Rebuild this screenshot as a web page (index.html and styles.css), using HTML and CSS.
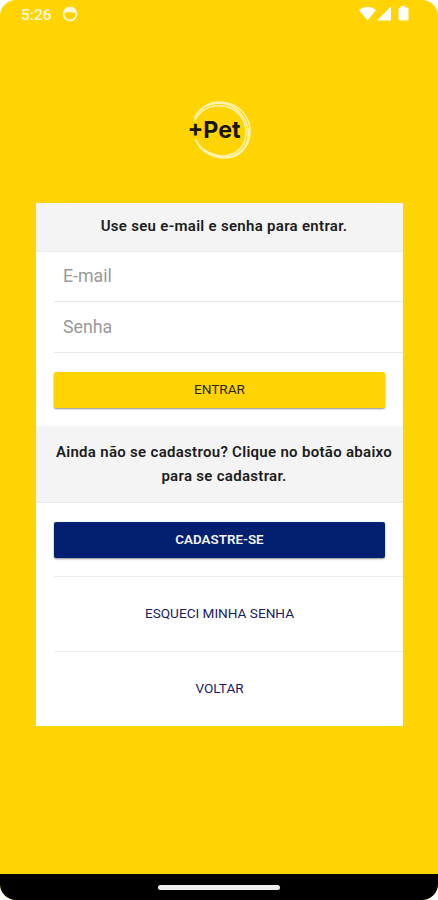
FILE: index.html
```html
<!DOCTYPE html>
<html lang="pt-BR">

<head>
    <meta charset="UTF-8">
    <meta name="viewport" content="width=device-width, initial-scale=1.0">
    <title>+Pet</title>

    <link rel="stylesheet" href="styles.css">
</head>

<body>
    <div class="screen">
        <div class="statusBar">
            <span class="time">5:26</span>
            <svg class="face" width="16" height="16" viewBox="0 0 16 16">
                <circle cx="8" cy="8" r="6.4" fill="none" stroke="#fff9df" stroke-width="1.7" />
                <path d="M2 7V4.500L5 1.500h6L14 4.500V7Q11 7.500 10 5.500Q8 7.500 6 5.500Q5 7.500 2 7z" fill="#fff9df" />
            </svg>
            <svg class="signals" width="51" height="16" viewBox="0 0 51 16">
                <path d="M0 4Q8.500-2.500 17 4L8.500 14.500z" fill="#fff" />
                <path d="M32 0.500V14.500H18z" fill="#fff" />
                <path d="M42 0h4v1.500h2q1.500 0 1.500 1.500v10q0 1.500-1.500 1.500h-7q-1.500 0-1.500-1.500V3q0-1.500 1.500-1.500h1z" fill="#fff" />
            </svg>
        </div>

        <div class="logo">
            <svg width="68" height="64" viewBox="0 0 68 64">
                <g fill="none" stroke="#fff3b4" stroke-width="1.500" stroke-linecap="round">
                    <path d="M9 18C14 5 28 0 41 3C55 6 65 19 64 33C63 49 52 58 39 58C26 58 14 51 10 40" />
                    <path d="M9 20C16 6 31 4 42 7C56 12 63 27 59 40C55 53 42 58 30 55C19 52 12 46 10 40" />
                    <path d="M9 17C20 -1 43 0 54 13C65 25 65 42 55 51C43 62 20 57 12 44" />
                </g>
                <text x="1.500" y="37.500" class="logoText" textLength="53" lengthAdjust="spacingAndGlyphs">+Pet</text>
            </svg>
        </div>

        <div class="card">
            <div class="header">Use seu e-mail e senha para entrar.</div>
            <input class="field field-email" type="text" placeholder="E-mail">
            <input class="field" type="password" placeholder="Senha">
            <div class="btn btn-yellow">ENTRAR</div>
            <div class="header header-big">Ainda não se cadastrou? Clique no botão abaixo<br>para se cadastrar.</div>
            <div class="btn btn-blue">CADASTRE-SE</div>
            <div class="link">ESQUECI MINHA SENHA</div>
            <div class="link">VOLTAR</div>
        </div>

        <div class="navBar">
            <div class="handle"></div>
        </div>
    </div>
</body>

</html>
```
FILE: styles.css
```css
* {
    box-sizing: border-box;
}

body {
    margin: 0;
    background-color: white;
    font-family: Roboto, "Liberation Sans", sans-serif;
}

.screen {
    width: 438px;
    height: 900px;
    background-color: #ffd402;
    border-radius: 16px;
    overflow: hidden;
    display: flex;
    flex-direction: column;
}

.statusBar {
    height: 100px;
    padding: 6px 28px 0 21px;
    display: flex;
    align-items: flex-start;
}

.time {
    font-size: 15.5px;
    font-weight: 500;
    line-height: 18px;
    color: #fff9df;
}

.face {
    margin-left: 10px;
}

.signals {
    margin-left: auto;
}

.logo {
    height: 103px;
    padding-left: 186px;
}

.logo svg {
    display: block;
}

.logoText {
    font-family: Inter, Roboto, sans-serif;
    font-size: 23.5px;
    font-weight: 700;
    fill: #17150c;
}

.card {
    width: 367px;
    height: 523px;
    margin-left: 36px;
    background-color: white;
}

.header {
    height: 49px;
    padding: 11px 0 0 9px;
    background-color: #f4f4f4;
    border-bottom: 1px solid #ececec;
    text-align: center;
    font-size: 15px;
    font-weight: 600;
    letter-spacing: .3px;
    line-height: 24px;
    color: #1c1c1c;
    white-space: nowrap;
}

.header-big {
    height: 77px;
    margin-top: 18px;
    padding-top: 14px;
}

.field {
    display: block;
    width: 349px;
    height: 51px;
    margin-left: 18px;
    padding: 0 9px 1px;
    border: none;
    border-bottom: 1px solid #e9e9e9;
    outline: none;
    font-family: inherit;
    font-size: 17.8px;
}

.field-email {
    height: 50px;
    padding-bottom: 2px;
}

.field::placeholder {
    color: #999;
}

.btn {
    width: 331px;
    height: 36px;
    margin: 19px 18px 0;
    border-radius: 2px;
    box-shadow: 0 1px 2px rgba(0, 0, 0, .45);
    text-align: center;
    line-height: 35px;
    font-size: 13.6px;
    cursor: pointer;
}

.btn-yellow {
    background-color: #ffd402;
    color: #2c2604;
}

.btn-blue {
    background-color: #021f70;
    color: #f2f4fa;
    font-weight: 600;
    font-size: 13.4px;
}

.link {
    height: 75px;
    margin-left: 18px;
    padding-right: 18px;
    border-top: 1px solid #ececec;
    text-align: center;
    line-height: 73px;
    font-size: 13.6px;
    color: #1b1b66;
    cursor: pointer;
}

.btn-blue + .link {
    margin-top: 18px;
}

.navBar {
    height: 26px;
    margin-top: auto;
    background-color: black;
    display: flex;
    justify-content: center;
    align-items: center;
}

.handle {
    width: 122px;
    height: 5px;
    border-radius: 3px;
    background-color: #eee;
}
```
